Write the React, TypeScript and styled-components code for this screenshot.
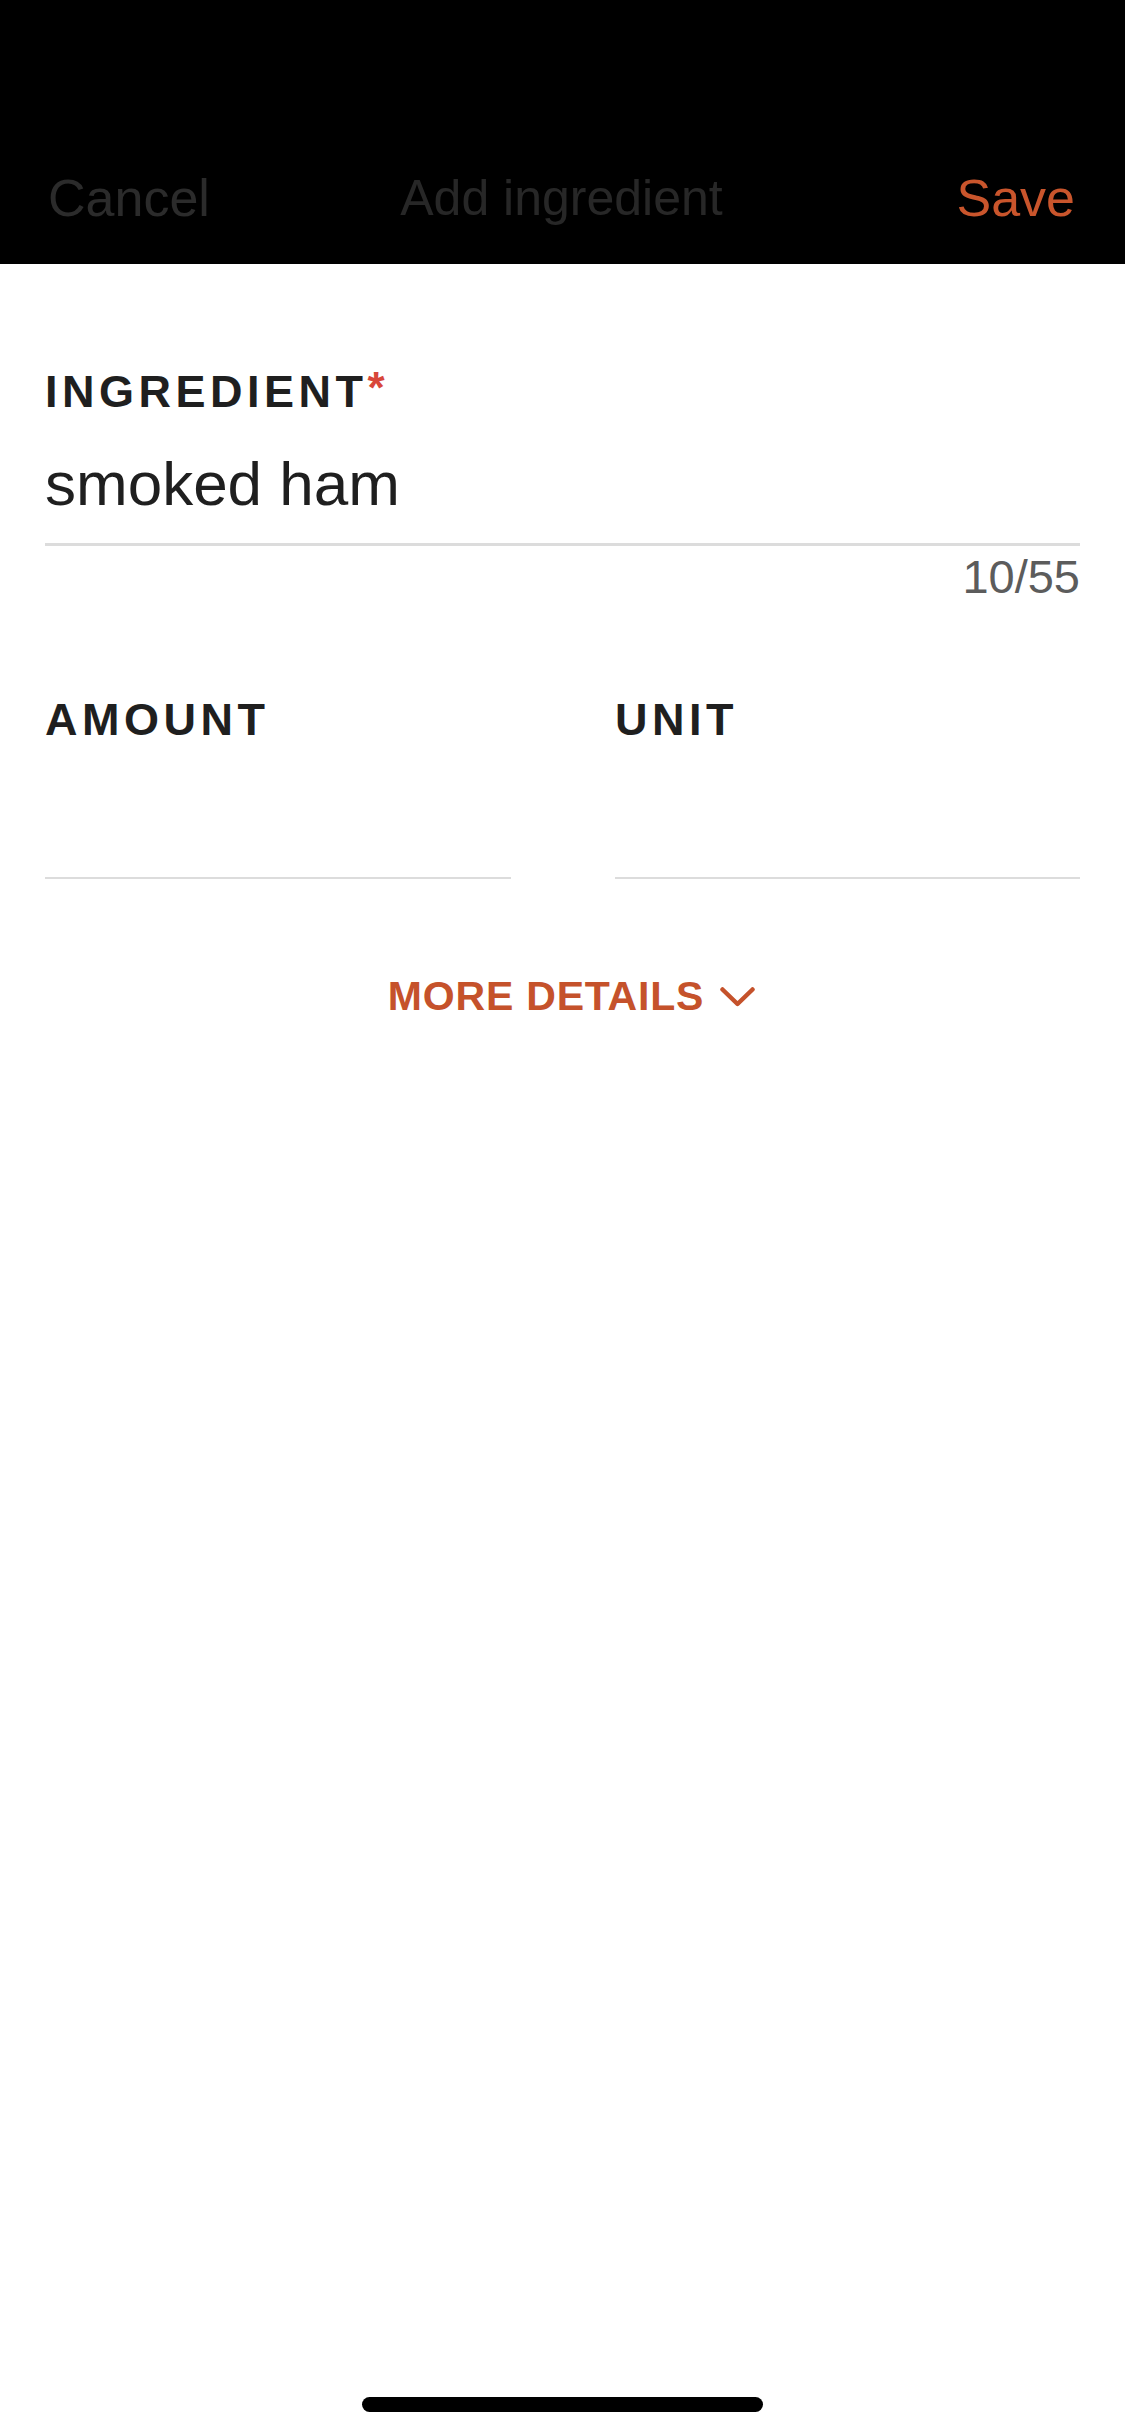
import React from "react";
import styled, { createGlobalStyle } from "styled-components";

const GlobalStyle = createGlobalStyle`
  html, body {
    margin: 0;
    padding: 0;
    background: #ffffff;
  }
  body {
    font-family: "Liberation Sans", Arial, sans-serif;
    -webkit-font-smoothing: antialiased;
  }
  * { box-sizing: border-box; }
`;

const Screen = styled.div`
  width: 1125px;
  min-height: 2436px;
  display: flex;
  flex-direction: column;
  background: #ffffff;
`;

const Header = styled.header`
  height: 264px;
  background: #000000;
  padding: 160px 50px 0 48px;
`;

const NavRow = styled.div`
  height: 76px;
  display: grid;
  grid-template-columns: 1fr auto 1fr;
  align-items: center;
`;

const NavButton = styled.button<{ $primary?: boolean; $align: "start" | "end" }>`
  justify-self: ${(p) => p.$align};
  background: none;
  border: none;
  padding: 0;
  font-family: "Liberation Sans", Arial, sans-serif;
  font-size: 52px;
  line-height: 1;
  color: ${(p) => (p.$primary ? "#c9552c" : "#2b2b2b")};
`;

const Title = styled.h1`
  margin: 0;
  font-family: "Liberation Sans", Arial, sans-serif;
  font-weight: 400;
  font-size: 50px;
  line-height: 1;
  color: #272727;
`;

const Form = styled.main`
  display: flex;
  flex-direction: column;
  padding: 102px 45px 0 45px;
`;

const Field = styled.div`
  display: flex;
  flex-direction: column;
`;

const Label = styled.label`
  font-family: "Liberation Sans", Arial, sans-serif;
  font-weight: 700;
  font-size: 45px;
  line-height: 1;
  letter-spacing: 4.5px;
  color: #1f1f1f;
`;

const Required = styled.span`
  color: #d8473a;
  font-size: 44px;
  letter-spacing: 0;
  vertical-align: 4px;
`;

const InputLine = styled.div<{ $thick?: boolean; $gap: number; $height: number }>`
  margin-top: ${(p) => p.$gap}px;
  height: ${(p) => p.$height}px;
  padding-bottom: 29px;
  border-bottom: ${(p) => (p.$thick ? 3 : 2)}px solid #dcdcdc;
  box-sizing: content-box;
  font-family: "Liberation Sans", Arial, sans-serif;
  font-size: 62px;
  line-height: 1;
  color: #1f1f1f;
`;

const Counter = styled.div`
  margin-top: 7px;
  align-self: flex-end;
  font-family: "Liberation Sans", Arial, sans-serif;
  font-size: 47px;
  line-height: 1;
  color: #5c5c5c;
`;

const Row = styled.div`
  margin-top: 97px;
  display: grid;
  grid-template-columns: 466px 465px;
  column-gap: 104px;
`;

const MoreButton = styled.button`
  margin-top: 97px;
  align-self: center;
  display: flex;
  align-items: center;
  gap: 16px;
  background: none;
  border: none;
  padding: 0 0 0 18px;
  font-family: "Liberation Sans", Arial, sans-serif;
  font-weight: 700;
  font-size: 41px;
  line-height: 1;
  letter-spacing: 0.8px;
  color: #c5522b;
`;

const HomeIndicator = styled.div`
  margin: auto auto 24px auto;
  width: 401px;
  height: 15px;
  border-radius: 8px;
  background: #000000;
`;

const Chevron = () => (
  <svg width="35" height="20" viewBox="0 0 35 20" fill="none">
    <path d="M2.5 2.5 L17.5 17 L32.5 2.5" stroke="#c5522b" strokeWidth="4.5" strokeLinecap="round" strokeLinejoin="round" />
  </svg>
);

export default function App() {
  return (
    <>
      <GlobalStyle />
      <Screen>
        <Header>
          <NavRow>
            <NavButton $align="start">Cancel</NavButton>
            <Title>Add ingredient</Title>
            <NavButton $align="end" $primary>
              Save
            </NavButton>
          </NavRow>
        </Header>
        <Form>
          <Field>
            <Label>
              INGREDIENT<Required>*</Required>
            </Label>
            <InputLine $thick $gap={39} $height={61}>
              smoked ham
            </InputLine>
            <Counter>10/55</Counter>
          </Field>
          <Row>
            <Field>
              <Label>AMOUNT</Label>
              <InputLine $gap={39} $height={67} />
            </Field>
            <Field>
              <Label>UNIT</Label>
              <InputLine $gap={39} $height={67} />
            </Field>
          </Row>
          <MoreButton>
            MORE DETAILS
            <Chevron />
          </MoreButton>
        </Form>
        <HomeIndicator />
      </Screen>
    </>
  );
}
